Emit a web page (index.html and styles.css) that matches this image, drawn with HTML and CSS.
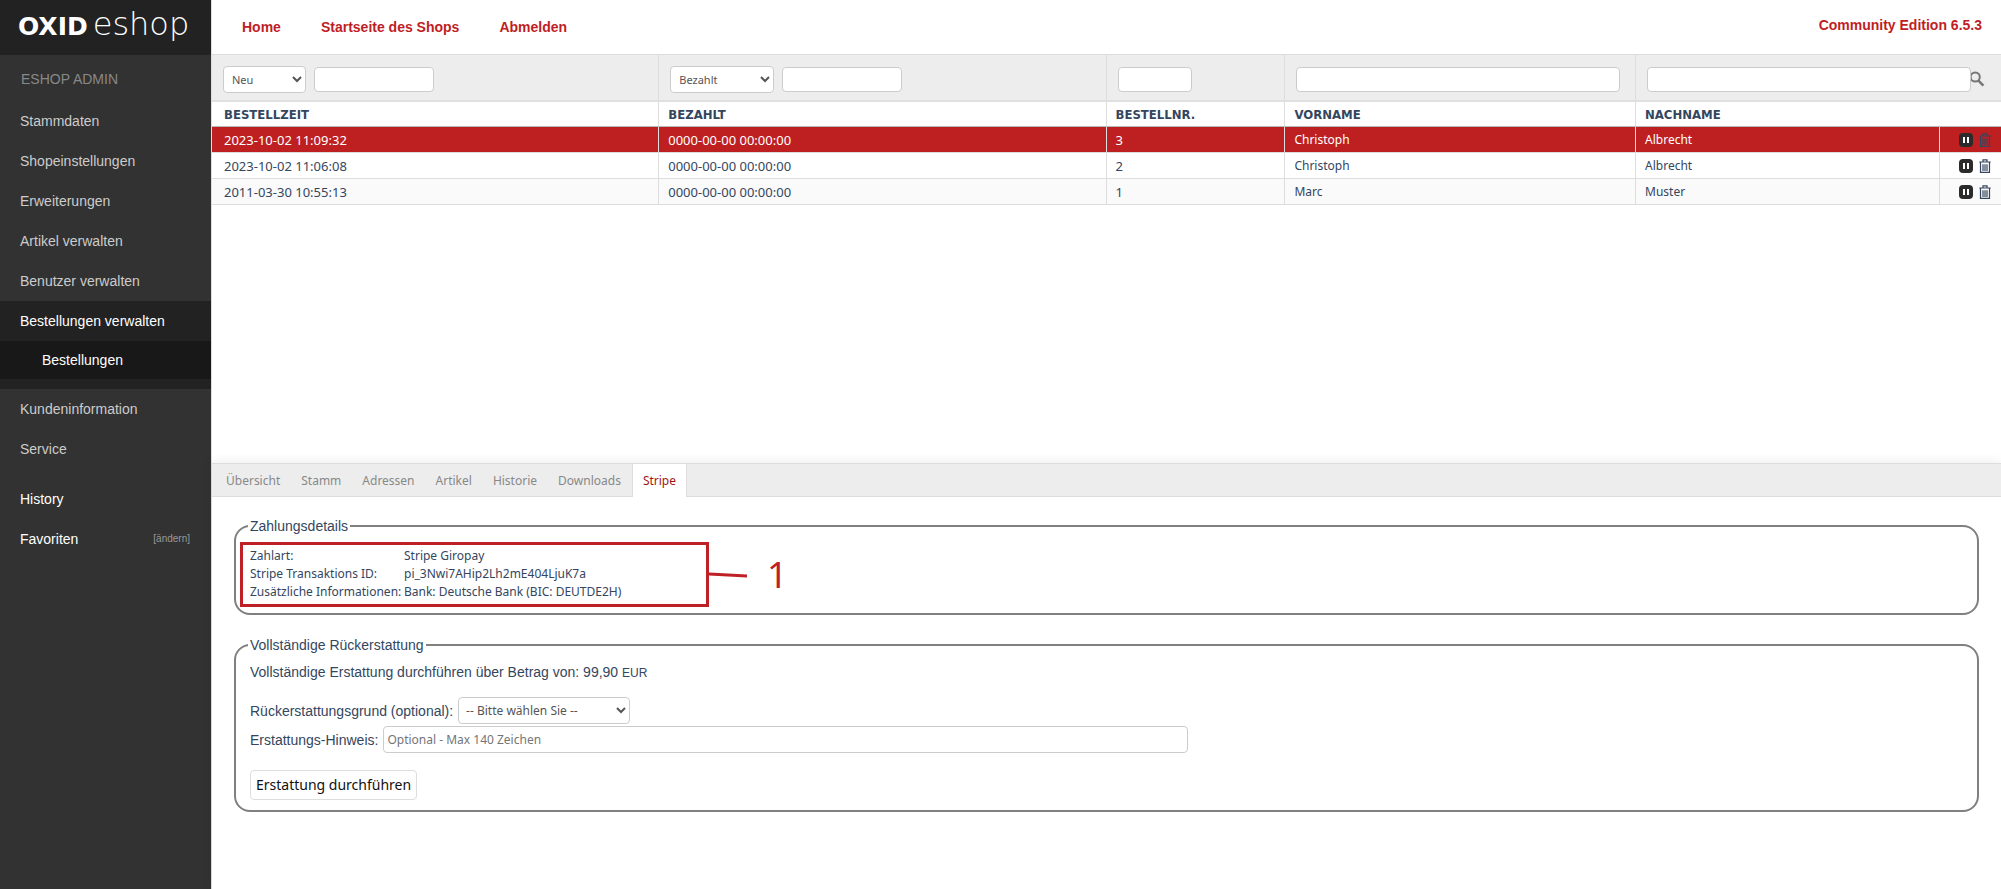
FILE: index.html
```html
<!DOCTYPE html>
<html lang="de">
<head>
<meta charset="utf-8">
<title>OXID eShop Admin – Bestellungen</title>
<link rel="stylesheet" href="styles.css">
</head>
<body>
<svg class="sprite" aria-hidden="true">
  <symbol id="pause" viewBox="0 0 14 14">
    <rect width="14" height="14" rx="4" fill="#2b2b2b"/>
    <path d="M4 4h2v6H4zM8 4h2v6H8z" fill="#fff"/>
  </symbol>
  <symbol id="trash" viewBox="0 0 12 14">
    <path d="M4 2.5V.8h4v1.7M.3 3h11.4M1.5 3.5v9.9h9V3.5M4 5.2V12M6 5.2V12M8 5.2V12" fill="none" stroke="currentColor" stroke-width="1.2"/>
  </symbol>
</svg>
<div class="app">
  <aside class="sidebar">
    <div class="logo"><span class="logo-brand">OXID</span><span class="logo-product">eshop</span></div>
    <div class="section-title">ESHOP ADMIN</div>
    <nav class="menu">
      <a class="menu-item" href="#">Stammdaten</a>
      <a class="menu-item" href="#">Shopeinstellungen</a>
      <a class="menu-item" href="#">Erweiterungen</a>
      <a class="menu-item" href="#">Artikel verwalten</a>
      <a class="menu-item" href="#">Benutzer verwalten</a>
      <div class="menu-group">
        <a class="menu-item bright" href="#">Bestellungen verwalten</a>
        <a class="submenu-item" href="#">Bestellungen</a>
      </div>
      <a class="menu-item" href="#">Kundeninformation</a>
      <a class="menu-item" href="#">Service</a>
    </nav>
    <nav class="shortcuts">
      <a class="menu-item bright" href="#">History</a>
      <div class="favorites"><a class="menu-item bright" href="#">Favoriten</a><a class="edit" href="#">[ändern]</a></div>
    </nav>
  </aside>
  <main class="main">
    <header class="topbar">
      <nav class="toplinks">
        <a href="#">Home</a>
        <a href="#">Startseite des Shops</a>
        <a href="#">Abmelden</a>
      </nav>
      <span class="version">Community Edition 6.5.3</span>
    </header>
    <section class="list-pane">
      <table class="orders">
        <colgroup><col class="c-time"><col class="c-time"><col class="c-nr"><col class="c-first"><col class="c-last"><col></colgroup>
        <tbody>
          <tr class="filters">
            <td><div class="filter-cell">
              <select class="field folder" aria-label="Ordner"><option>Neu</option></select>
              <input class="field date" type="text" aria-label="Bestellzeit">
            </div></td>
            <td><div class="filter-cell">
              <select class="field paid" aria-label="Datumsfeld"><option>Bezahlt</option></select>
              <input class="field date" type="text" aria-label="Bezahlt">
            </div></td>
            <td><div class="filter-cell"><input class="field number" type="text" aria-label="Bestellnr."></div></td>
            <td><div class="filter-cell"><input class="field name" type="text" aria-label="Vorname"></div></td>
            <td colspan="2"><div class="filter-cell search-cell">
              <input class="field name" type="text" aria-label="Nachname">
              <button class="search" type="submit" aria-label="Suchen"><svg viewBox="0 0 15 16"><circle cx="4.2" cy="6" r="4.6" fill="none" stroke="#777" stroke-width="2"/><path d="M7.4 9.6l5 5" stroke="#777" stroke-width="2.6"/></svg></button>
            </div></td>
          </tr>
          <tr class="heads">
            <th>BESTELLZEIT</th><th>BEZAHLT</th><th>BESTELLNR.</th><th>VORNAME</th><th colspan="2">NACHNAME</th>
          </tr>
          <tr class="row selected">
            <td class="num">2023-10-02 11:09:32</td><td class="num">0000-00-00 00:00:00</td><td class="num">3</td><td>Christoph</td><td>Albrecht</td>
            <td><div class="actions"><button aria-label="Stornieren"><svg class="i-pause"><use href="#pause"/></svg></button><button aria-label="Löschen"><svg class="i-trash"><use href="#trash"/></svg></button></div></td>
          </tr>
          <tr class="row">
            <td class="num">2023-10-02 11:06:08</td><td class="num">0000-00-00 00:00:00</td><td class="num">2</td><td>Christoph</td><td>Albrecht</td>
            <td><div class="actions"><button aria-label="Stornieren"><svg class="i-pause"><use href="#pause"/></svg></button><button aria-label="Löschen"><svg class="i-trash"><use href="#trash"/></svg></button></div></td>
          </tr>
          <tr class="row alt">
            <td class="num">2011-03-30 10:55:13</td><td class="num">0000-00-00 00:00:00</td><td class="num">1</td><td>Marc</td><td>Muster</td>
            <td><div class="actions"><button aria-label="Stornieren"><svg class="i-pause"><use href="#pause"/></svg></button><button aria-label="Löschen"><svg class="i-trash"><use href="#trash"/></svg></button></div></td>
          </tr>
        </tbody>
      </table>
    </section>
    <section class="edit-pane">
      <nav class="tabs">
        <a href="#">Übersicht</a><a href="#">Stamm</a><a href="#">Adressen</a><a href="#">Artikel</a><a href="#">Historie</a><a href="#">Downloads</a><a class="active" href="#">Stripe</a>
      </nav>
      <div class="panels">
        <fieldset class="panel payment">
          <legend>Zahlungsdetails</legend>
          <dl class="details">
            <dt>Zahlart:</dt><dd>Stripe Giropay</dd>
            <dt>Stripe Transaktions ID:</dt><dd>pi_3Nwi7AHip2Lh2mE404LjuK7a</dd>
            <dt>Zusätzliche Informationen:</dt><dd>Bank: Deutsche Bank (BIC: DEUTDE2H)</dd>
          </dl>
          <div class="callout">
            <div class="callout-box"></div>
            <svg class="callout-line" viewBox="0 0 38 6"><path d="M0 2L38 4" stroke="#be2026" stroke-width="3"/></svg>
            <span class="callout-number">1</span>
          </div>
        </fieldset>
        <fieldset class="panel refund">
          <legend>Vollständige Rückerstattung</legend>
          <p class="amount">Vollständige Erstattung durchführen über Betrag von: 99,90 <small>EUR</small></p>
          <div class="form-row">
            <label for="reason">Rückerstattungsgrund (optional):</label>
            <select class="field reason" id="reason"><option>-- Bitte wählen Sie --</option></select>
          </div>
          <div class="form-row">
            <label for="note">Erstattungs-Hinweis:</label>
            <input class="field note" id="note" type="text" maxlength="140" placeholder="Optional - Max 140 Zeichen">
          </div>
          <button class="submit" type="submit">Erstattung durchführen</button>
        </fieldset>
      </div>
    </section>
  </main>
</div>
</body>
</html>
```

FILE: styles.css
```css
* { box-sizing: border-box; }
body { margin: 0; background: #fff; color: #34465e; font: 12px/18px "Noto Sans", sans-serif; }
a { color: inherit; text-decoration: none; }
button { margin: 0; padding: 0; border: 0; background: none; color: inherit; }
.sprite { display: none; }
.app { display: flex; min-height: 100vh; }

.sidebar { flex: none; width: 211px; background: #323232; color: #ccc; font: 14px/20px "Liberation Sans", Arial, sans-serif; }
.logo { display: flex; align-items: baseline; gap: 5px; height: 55px; padding: 6px 0 0 18px; background: #222; color: #fff; font-family: "DejaVu Sans", sans-serif; line-height: 36px; }
.logo-brand { font-size: 25px; font-weight: 700; }
.logo-product { font-size: 32px; font-weight: 200; }
.section-title { padding: 14px 21px 12px; color: #888; }
.menu-item, .submenu-item { display: block; padding: 10px 20px; }
.bright, .submenu-item { color: #fff; }
.menu-group { padding-bottom: 10px; background: #222; }
.submenu-item { padding: 9px 42px; background: #181818; }
.shortcuts { padding-top: 10px; }
.favorites { display: flex; justify-content: space-between; align-items: center; padding-right: 21px; }
.edit { color: #999; font-size: 10px; }

.main { display: flex; flex: 1; flex-direction: column; min-width: 0; border-left: 1px solid #ddd; }
.topbar { display: flex; justify-content: space-between; height: 55px; padding: 0 19px 0 30px; border-bottom: 1px solid #ddd; color: #bf1e24; font: bold 14px/20px "Liberation Sans", Arial, sans-serif; }
.toplinks { display: flex; gap: 40px; padding-top: 17px; }
.version { padding-top: 15px; }

.list-pane { flex: 408 0 0; }
.orders { width: 100%; border-collapse: separate; border-spacing: 0; table-layout: fixed; }
.c-time { width: 25%; }
.c-nr { width: 10%; }
.c-first { width: 19.6%; }
.c-last { width: 17%; }
.orders td, .orders th { height: 26px; padding: 0 0 0 9px; border-right: 1px solid #ddd; border-bottom: 1px solid #ddd; text-align: left; }
.orders tr > :first-child { padding-left: 12px; }
.orders tr > :last-child { border-right: 0; }
.orders .filters td { height: 47px; padding: 3px 0 0 11px; border-bottom: 2px solid #e0e0e0; background: #ededed; }
.orders .heads th { height: 25px; padding-top: 2px; border-bottom-color: #b9b9b9; font: bold 13px/18px "DejaVu Sans Condensed", "DejaVu Sans", sans-serif; }
.orders .num { font-size: 13px; }
.selected td { background: #be2022; color: #fff; }
.alt td { background: #fafafa; }
.filter-cell { display: flex; align-items: center; gap: 8px; }
.field { height: 25px; padding: 0 4px; border: 1px solid #ccc; border-radius: 4px; background: #fff; color: #555; font: 12px "Noto Sans", sans-serif; }
select.field { height: 27px; }
.folder { width: 83px; font-size: 11px; }
.paid { width: 104px; font-size: 11px; }
.date { width: 120px; }
.number { width: 74px; }
.name { width: 324px; }
.search-cell { gap: 0; }
.search { width: 15px; height: 16px; }
.search svg { display: block; width: 15px; height: 16px; }
.actions { display: flex; justify-content: flex-end; gap: 6px; padding-right: 10px; }
.actions svg { display: block; height: 14px; }
.i-pause { width: 14px; }
.i-trash { width: 12px; color: #34465e; }

.edit-pane { flex: 426 0 0; box-shadow: 0 -2px 10px #0001; }
.tabs { display: flex; gap: 1px; height: 34px; padding-left: 4px; border-top: 1px solid #ddd; border-bottom: 1px solid #ddd; background: #ededed; color: #888; line-height: 33px; }
.tabs a { padding: 0 10px; }
.tabs .active { height: 33px; border: solid #ddd; border-width: 0 1px; background: #fff; color: #a31515; }
.panels { display: flex; flex-direction: column; gap: 20px; padding: 19px 22px 20px; }
.panel { position: relative; min-width: 0; margin: 0; padding: 0 14px; border: 2px solid #808080; border-radius: 16px; font: 14px/20px "Liberation Sans", Arial, sans-serif; }
.panel legend { padding: 0 2px; margin-left: -2px; }
.details { display: grid; grid-template-columns: 154px 1fr; margin: 0; padding: 11px 0 12px; font: 12px/18px "Noto Sans", sans-serif; white-space: nowrap; }
.details dd { margin: 0; }
.callout { position: absolute; top: 6px; left: 4px; display: flex; align-items: center; color: #be2026; }
.callout-box { width: 469px; height: 65px; border: 3px solid #be2026; }
.callout-line { width: 38px; height: 6px; }
.callout-number { margin-left: 20px; font: 36px/40px "Noto Sans", sans-serif; }
.amount { margin: 7px 0 14px; }
.amount small { font-size: 12px; }
.form-row { display: flex; align-items: center; gap: 5px; margin-bottom: 2px; }
.form-row .field { height: 27px; padding-left: 3px; }
.form-row .reason { width: 172px; }
.form-row .note { width: 805px; }
.submit { height: 30px; margin: 15px 0 10px; padding: 0 5px; border: 1px solid #ddd; border-radius: 4px; background: #fff; color: #111; font: 14px/20px "Noto Sans", sans-serif; }
```
